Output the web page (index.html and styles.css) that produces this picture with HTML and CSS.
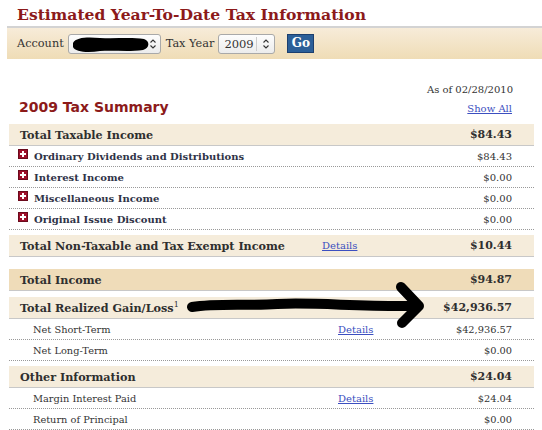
FILE: index.html
```html
<!DOCTYPE html>
<html>
<head>
<meta charset="utf-8">
<link rel="stylesheet" href="styles.css">
</head>
<body>
<h1 class="title">Estimated Year-To-Date Tax Information</h1>
<div class="toolbar">
  <span class="lbl">Account</span>
  <span class="select acct">
    <svg class="scrib" width="82" height="18" viewBox="0 0 82 18"><path d="M3 8 C6 2 18 2 30 3 C45 4 60 2 74 4 C80 6 80 13 73 15 C58 17 44 15 30 16 C18 18 5 17 3 12 Z" fill="#000"/></svg>
    <span class="chev"><svg width="8" height="12" viewBox="0 0 8 12"><path d="M1.5 4.5 L4 2 L6.5 4.5 M1.5 7.5 L4 10 L6.5 7.5" fill="none" stroke="#333" stroke-width="1.1"/></svg></span>
  </span>
  <span class="lbl">Tax Year</span>
  <span class="select year">
    <span class="yv">2009</span>
    <span class="div"></span>
    <span class="chev"><svg width="8" height="12" viewBox="0 0 8 12"><path d="M1.5 4.5 L4 2 L6.5 4.5 M1.5 7.5 L4 10 L6.5 7.5" fill="none" stroke="#333" stroke-width="1.1"/></svg></span>
  </span>
  <button class="go">Go</button>
</div>

<div class="panel">
  <div class="asof">As of 02/28/2010</div>
  <div class="headline">
    <h2 class="summary">2009 Tax Summary</h2>
    <a class="link" href="#">Show All</a>
  </div>

  <div class="sect first"><span>Total Taxable Income</span><span></span><span class="val">$84.43</span></div>
  <div class="item"><span><i class="plus"></i>Ordinary Dividends and Distributions</span><span class="val">$84.43</span></div>
  <div class="item"><span><i class="plus"></i>Interest Income</span><span class="val">$0.00</span></div>
  <div class="item"><span><i class="plus"></i>Miscellaneous Income</span><span class="val">$0.00</span></div>
  <div class="item"><span><i class="plus"></i>Original Issue Discount</span><span class="val">$0.00</span></div>

  <div class="sect nontax"><span>Total Non-Taxable and Tax Exempt Income</span><a class="link" href="#">Details</a><span class="val">$10.44</span></div>

  <div class="sect total"><span>Total Income</span><span></span><span class="val">$94.87</span></div>

  <div class="sect gain"><span>Total Realized Gain/Loss<sup>1</sup></span><span></span><span class="val">$42,936.57</span></div>
  <div class="sub"><span>Net Short-Term</span><a class="link" href="#">Details</a><span class="val">$42,936.57</span></div>
  <div class="sub"><span>Net Long-Term</span><span></span><span class="val">$0.00</span></div>

  <div class="sect other"><span>Other Information</span><span></span><span class="val">$24.04</span></div>
  <div class="sub"><span>Margin Interest Paid</span><a class="link" href="#">Details</a><span class="val">$24.04</span></div>
  <div class="sub"><span>Return of Principal</span><span></span><span class="val">$0.00</span></div>

  <svg class="arrow" width="250" height="50" viewBox="0 0 250 50"><path d="M5 27 C30 23 60 26 90 24 C130 22 170 27 228 26 M214 7 L232 26 L215 43" fill="none" stroke="#000" stroke-width="10" stroke-linecap="round" stroke-linejoin="round"/></svg>
</div>
</body>
</html>
```

FILE: styles.css
```css
html, body {
  margin: 0;
  padding: 0;
  background: #fff;
}
body {
  font-family: "DejaVu Serif", serif;
  color: #333;
  width: 542px;
  height: 430px;
  overflow: hidden;
  position: relative;
}
.title {
  margin: 0;
  padding: 4px 0 0 17px;
  height: 22px;
  font-size: 15.6px;
  font-weight: bold;
  color: #8c1a1a;
  line-height: 22px;
  white-space: nowrap;
}
.toolbar {
  margin-left: 7px;
  border-top: 2px solid #d3d3d3;
  height: 31px;
  background: linear-gradient(#f7ecd9, #efdcb6);
  display: flex;
  align-items: center;
  padding-left: 10px;
  font-size: 11.3px;
  color: #333;
}
.lbl {
  margin-right: 4px;
}
.select {
  display: inline-flex;
  align-items: center;
  border: 1px solid #a9a9a9;
  border-radius: 3px;
  background: linear-gradient(#fdfdfd, #ececec);
  box-sizing: border-box;
  position: relative;
  margin-right: 5px;
}
.acct {
  width: 93px;
  height: 20px;
}
.scrib {
  position: absolute;
  left: 1px;
  top: 0px;
}
.acct .chev {
  margin-left: auto;
}
.chev {
  display: inline-flex;
  width: 14px;
  justify-content: center;
}
.year {
  width: 57px;
  height: 20px;
  margin-right: 12px;
}
.yv {
  box-sizing: border-box;
  padding-left: 5px;
  width: 37px;
  font-size: 11.5px;
}
.div {
  width: 1px;
  height: 14px;
  background: #ccc;
}
.year .chev {
  flex: 1;
}
.go {
  width: 27px;
  height: 19px;
  padding: 0;
  border: 1px solid #1c3f6e;
  background: #2c5f98;
  color: #fff;
  font-family: "DejaVu Serif", serif;
  font-weight: bold;
  font-size: 12px;
  line-height: 17px;
}
.panel {
  margin-left: 9px;
  width: 525px;
  font-size: 11px;
}
.asof {
  text-align: right;
  padding-right: 21px;
  margin-top: 24px;
  height: 14px;
  line-height: 14px;
  font-size: 10px;
  color: #333;
}
.headline {
  display: flex;
  justify-content: space-between;
  align-items: center;
  height: 20px;
  padding: 0 22px 0 10px;
  margin-bottom: 7px;
}
.summary {
  margin: 0;
  font-family: "DejaVu Sans", sans-serif;
  font-size: 14px;
  font-weight: bold;
  color: #8c1a1a;
}
.link {
  color: #3c4fc0;
  text-decoration: underline;
  font-size: 10px;
}
.headline .link {
  position: relative;
  top: 1px;
}
.sect, .item, .sub {
  display: grid;
  align-items: center;
  box-sizing: border-box;
  padding-right: 22px;
  white-space: nowrap;
}
.sect {
  grid-template-columns: 1fr 95px 95px;
  height: 22px;
  background: #f5ecdb;
  border-bottom: 1px solid #c8c8c8;
  padding-left: 11px;
  font-weight: bold;
  font-size: 11.2px;
  color: #2f2f2f;
  margin-top: 5px;
}
.sect.first { margin-top: 0; }
.sect.total { background: #efdcb9; margin-top: 12px; }
.sect.gain { margin-top: 6px; }
.sect .val { font-size: 11px; }
.sect .link { font-weight: normal; }
sup {
  font-size: 8px;
  font-weight: normal;
  vertical-align: 5px;
  line-height: 0;
}
.val {
  text-align: right;
}
.item {
  grid-template-columns: 1fr 95px;
  height: 21px;
  border-bottom: 1px dotted #999;
  padding-left: 9px;
}
.item span:first-child {
  display: flex;
  align-items: center;
  font-weight: bold;
  font-size: 10px;
  color: #2f3347;
}
.item .val { font-size: 10px; }
.plus {
  display: inline-block;
  width: 10px;
  height: 10px;
  margin-right: 6px;
  position: relative;
  top: -2px;
  background:
    linear-gradient(#fff, #fff) center / 6px 2px no-repeat,
    linear-gradient(#fff, #fff) center / 2px 6px no-repeat,
    #9e0f2a;
  box-shadow: 0 0 0 1px #6a0a1c inset;
}
.sub {
  grid-template-columns: 1fr 79px 95px;
  height: 21px;
  border-bottom: 1px dotted #999;
  padding-left: 24px;
  font-size: 9.8px;
  color: #333;
}
.arrow {
  position: absolute;
  left: 187px;
  top: 280px;
}
```
